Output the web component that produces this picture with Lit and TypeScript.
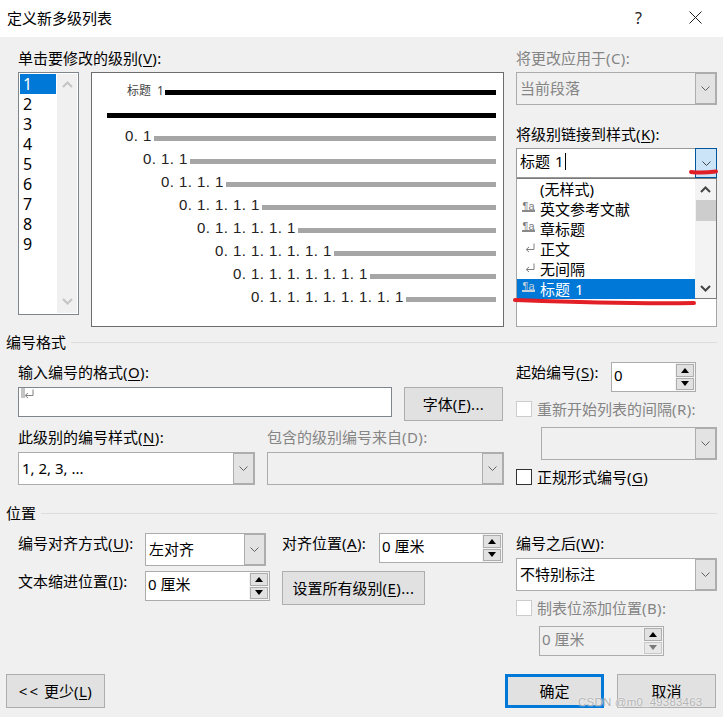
import { LitElement, html, css, svg } from "lit";
import { customElement } from "lit/decorators.js";

const chevron = () => html`<svg width="9" height="5" viewBox="0 0 9 5"><path d="M0.5 0.5 L4.5 4.5 L8.5 0.5" fill="none" stroke="currentColor" stroke-width="1"/></svg>`;
const bigChevron = (up: boolean) => html`<svg width="11" height="7" viewBox="0 0 11 7"><path d="${up ? "M1 6 L5.5 1.5 L10 6" : "M1 1 L5.5 5.5 L10 1"}" fill="none" stroke="currentColor" stroke-width="2"/></svg>`;
const enterIcon = html`<svg width="10" height="10" viewBox="0 0 10 10"><path d="M9 0.5 V6.5 H1.5 M4 4 L1.2 6.5 L4 9" fill="none" stroke="#808080" stroke-width="1"/></svg>`;
const key = (k: string, end = ":") => html`<span class="lat">(<u>${k}</u>)${end}</span>`;
const plainKey = (k: string) => html`<span class="lat">(${k}):</span>`;

function combo(text: unknown, w: number, disabled = false) {
  return html`<div class="combo ${disabled ? "dis" : ""}" style="width:${w}px"><span class="combo-text">${text}</span><span class="combo-btn">${chevron()}</span></div>`;
}
function spin(text: string, w: number, disabled = false) {
  return html`<div class="spin ${disabled ? "dis" : ""}" style="width:${w}px"><span class="spin-text">${text}</span><span class="spin-btns"><span class="sb"><i class="up"></i></span><span class="sb ${disabled ? "off" : ""}"><i class="down"></i></span></span></div>`;
}

@customElement("app-root")
export class AppRoot extends LitElement {
  static styles = css`
    :host { display: block; width: 723px; height: 717px; overflow: hidden; }
    * { box-sizing: border-box; }
    .dlg { position: relative; width: 723px; height: 717px; background: #f0f0f0; display: flex; flex-direction: column; color: #000;
      font: 15px/20px "Noto Sans", "Noto Sans CJK SC", sans-serif; }
    u { text-underline-offset: 2px; text-decoration-thickness: 1px; }
    .lat { letter-spacing: 0.4px; }
    .title { height: 37px; background: #fff; display: flex; align-items: center; padding: 0 21px 2px 7px; flex: none; }
    .title .t { flex: 1; }
    .help { margin-right: 47px; font-size: 16px; color: #222; }
    .top { display: grid; grid-template-columns: 498px 201px; padding: 11px 0 0 18px; }
    .lbl { height: 20px; white-space: nowrap; }
    .gray { color: #858585; }
    .row { display: flex; align-items: flex-start; }
    .list { width: 61px; height: 243px; background: #fff; border: 1px solid #7f858c; padding: 1px; display: flex; margin-right: 12px; margin-top: 4px; }
    .items { width: 36px; font-size: 16px; }
    .items div { height: 20px; padding-left: 3px; }
    .items .sel { background: #0078d7; color: #fff; }
    .sbar { flex: 1; margin-left: 1px; background: #f0f0f0; display: flex; flex-direction: column; justify-content: space-between; align-items: center; padding: 7px 0 8px; color: #c4c4c4; }
    .preview { width: 413px; height: 255px; background: #fff; border: 1px solid #6d6d6d; margin-top: 4px; padding: 8px 7px 0 0; }
    .pr { height: 23px; display: flex; align-items: center; }
    .pr .n { flex: none; white-space: nowrap; font: 15px/20px "Liberation Sans", sans-serif; letter-spacing: 0.44px; color: #222; margin-bottom: 5px; }
    .pr .h { flex: none; white-space: nowrap; font-size: 12px; color: #444; word-spacing: 3px; margin-bottom: 3px; }
    .pr .line { flex: 1; height: 5px; background: #a6a6a6; }
    .pr .line.k { background: #000; }
    .combo { height: 33px; display: flex; background: #fff; border: 1px solid #acacac; }
    .combo-text { flex: 1; padding: 0 2px 0 3px; line-height: 30px; white-space: nowrap; }
    .combo-btn { width: 22px; flex: none; background: #e3e3e3; border: 2px solid #adadad; border-left: 1px solid #adadad; display: flex; align-items: center; justify-content: center; color: #606060; margin: -1px -1px -1px 0; }
    .combo.dis { background: #f0f0f0; }
    .combo.dis .combo-text { color: #858585; }
    .combo.link { height: 30px; border-color: #9a9a9a; }
    .combo.link .combo-text { line-height: 24px; word-spacing: 1px; }
    .caret { display: inline-block; width: 1px; height: 17px; background: #000; margin-left: 2px; vertical-align: -3px; }
    .combo.link .combo-btn { background: #cce4f7; border: 1px solid #005499; margin: -1px; width: 22px; color: #444; }
    .drop { height: 149px; background: #fff; border: 1px solid #a6a6a6; }
    .drop-in { height: 121px; display: flex; border-bottom: 1px solid #7d7d7d; border-top: 1px solid #7a7a7a; border-right: 1px solid #7a7a7a; margin: -1px -1px 0 0; }
    .opts { width: 178px; flex: none; }
    .opt { height: 20px; display: flex; align-items: center; white-space: nowrap; }
    .opt .ic { width: 23px; flex: none; display: flex; justify-content: center; }
    .opt .ic svg { margin: -3px 0 0 3px; }
    .para { font: 11px/8px "Liberation Sans", sans-serif; color: #7a7a7a; border-bottom: 2px solid #8a8a8a; height: 10px; width: 13px; text-align: center; margin-top: -4px; }
    .opt.sel { background: #0078d7; color: #fff; word-spacing: 1px; }
    .opt.sel .para { color: #c4d2df; border-color: #c4d2df; }
    .dsb { flex: 1; position: relative; display: flex; flex-direction: column; justify-content: space-between; align-items: center; padding: 7px 0 6px; color: #444; background: #f3f3f3; }
    .thumb { position: absolute; left: 1px; right: 0; top: 21px; height: 21px; background: #cdcdcd; }
    .sect { display: flex; align-items: center; padding: 0 0 0 6px; height: 20px; width: 717px; }
    .sect::after { content: ""; flex: 1; height: 1px; background: #dcdcdc; margin-left: 5px; }
    .field { width: 374px; height: 30px; background: #fff; border: 1px solid #7f858c; position: relative; margin-right: 12px; overflow: hidden; }
    .mark { position: absolute; left: 2px; top: 0; width: 4px; height: 10px; background: #c4c4c4; }
    .mark-ic { position: absolute; left: 5px; top: -5px; }
    .btn { height: 34px; background: #e1e1e1; border: 1px solid #adadad; display: flex; align-items: center; justify-content: center; white-space: nowrap; flex: none; }
    .ll { letter-spacing: 2px; margin-right: 4px; }
    .spin { height: 30px; display: flex; background: #fff; border: 1px solid #acacac; flex: none; }
    .spin-text { flex: 1; padding-left: 2px; line-height: 25px; white-space: nowrap; }
    .spin.dis { background: #f0f0f0; }
    .spin.dis .spin-text { color: #858585; }
    .spin-btns { width: 20px; flex: none; display: flex; flex-direction: column; gap: 1px; padding: 1px; background: #f4f4f4; }
    .sb { flex: 1; background: #e1e1e1; border: 1px solid #adadad; display: flex; align-items: center; justify-content: center; }
    .sb.off { background: #e8e8e8; border-color: #c8c8c8; }
    .sb.off .down { border-top-color: #7a7a7a; }
    .up, .down { display: block; width: 0; height: 0; border-left: 4.5px solid transparent; border-right: 4.5px solid transparent; }
    .up { border-bottom: 5px solid #000; }
    .down { border-top: 5px solid #000; }
    .chk { display: flex; align-items: center; height: 20px; white-space: nowrap; }
    .box { width: 16px; height: 16px; background: #fff; border: 1px solid #333; margin-right: 5px; flex: none; }
    .chk.dis .box { border-color: #ccc; }
    .sub { display: grid; grid-template-columns: 498px 201px; padding-left: 18px; }
    .cell { padding-top: 10px; }
    .foot { margin-top: auto; display: flex; padding: 0 7px 9px 6px; gap: 13px; }
    .foot .btn { width: 99px; }
    .foot .sp { flex: 1; }
    .btn.def { border: 3px solid #0078d7; }
    .ink { position: absolute; left: 0; top: 0; pointer-events: none; }
    .wm { position: absolute; left: 578px; top: 696px; font: 11.5px/13px "Liberation Sans", sans-serif; color: #b4b4b4; text-shadow: 0 0 2px #fff; letter-spacing: 0.2px; white-space: nowrap; pointer-events: none; }
  `;

  private levels = ["0. 1", "0. 1. 1", "0. 1. 1. 1", "0. 1. 1. 1. 1", "0. 1. 1. 1. 1. 1", "0. 1. 1. 1. 1. 1. 1", "0. 1. 1. 1. 1. 1. 1. 1", "0. 1. 1. 1. 1. 1. 1. 1. 1"];

  render() {
    return html`<div class="dlg">
      <div class="title"><span class="t">定义新多级列表</span><span class="help">?</span>
        <svg width="13" height="13" viewBox="0 0 13 13"><path d="M0.5 0.5 L12.5 12.5 M12.5 0.5 L0.5 12.5" stroke="#222" stroke-width="1" fill="none"/></svg>
      </div>

      <div class="top">
        <div>
          <div class="lbl">单击要修改的级别${key("V")}</div>
          <div class="row">
            <div class="list">
              <div class="items">${[1, 2, 3, 4, 5, 6, 7, 8, 9].map((n) => html`<div class="${n === 1 ? "sel" : ""}">${n}</div>`)}</div>
              <div class="sbar">${bigChevron(true)}${bigChevron(false)}</div>
            </div>
            <div class="preview">
              <div class="pr" style="padding-left:35px"><span class="h" style="width:38px">标题 1</span><span class="line k"></span></div>
              <div class="pr" style="padding-left:15px"><span class="line k"></span></div>
              ${this.levels.map((t, i) => html`<div class="pr" style="padding-left:${33 + 18 * i}px"><span class="n" style="width:${29 + 18 * i}px">${t}</span><span class="line"></span></div>`)}
            </div>
          </div>
        </div>
        <div>
          <div class="lbl gray">将更改应用于${plainKey("C")}</div>
          <div style="height:4px"></div>
          ${combo("当前段落", 201, true)}
          <div style="height:19px"></div>
          <div class="lbl">将级别链接到样式${key("K")}</div>
          <div style="height:4px"></div>
          <div class="combo link" style="width:201px"><span class="combo-text">标题 1<span class="caret"></span></span><span class="combo-btn">${chevron()}</span></div>
          <div class="drop">
            <div class="drop-in">
              <div class="opts">
                <div class="opt"><span class="ic"></span>(无样式)</div>
                <div class="opt"><span class="ic"><span class="para">¶a</span></span>英文参考文献</div>
                <div class="opt"><span class="ic"><span class="para">¶a</span></span>章标题</div>
                <div class="opt"><span class="ic">${enterIcon}</span>正文</div>
                <div class="opt"><span class="ic">${enterIcon}</span>无间隔</div>
                <div class="opt sel"><span class="ic"><span class="para">¶a</span></span>标题 1</div>
              </div>
              <div class="dsb"><span class="thumb"></span>${bigChevron(true)}${bigChevron(false)}</div>
            </div>
          </div>
        </div>
      </div>

      <div style="height:5px"></div>
      <div class="sect">编号格式</div>
      <div class="sub">
        <div class="cell">
          <div class="lbl">输入编号的格式${key("O")}</div>
          <div class="row" style="margin-top:5px">
            <div class="field"><span class="mark"></span><span class="mark-ic">${enterIcon}</span></div>
            <div class="btn" style="width:99px">字体${key("F", "...")}</div>
          </div>
          <div class="row" style="margin-top:6px">
            <div style="width:249px"><div class="lbl">此级别的编号样式${key("N")}</div><div style="height:5px"></div>${combo("1, 2, 3, ...", 237)}</div>
            <div><div class="lbl gray">包含的级别编号来自${plainKey("D")}</div><div style="height:5px"></div>${combo("", 237, true)}</div>
          </div>
        </div>
        <div class="cell">
          <div class="row">
            <div class="lbl" style="width:95px">起始编号${key("S")}</div>
            ${spin("0", 85)}
          </div>
          <div class="chk dis gray" style="margin-top:7px"><span class="box"></span>重新开始列表的间隔${plainKey("R")}</div>
          <div style="margin:8px 0 0 25px">${combo("", 176, true)}</div>
          <div class="chk" style="margin-top:7px"><span class="box"></span>正规形式编号${key("G", "")}</div>
        </div>
      </div>

      <div style="height:16px"></div>
      <div class="sect">位置</div>
      <div class="sub">
        <div class="cell">
          <div class="row">
            <div class="lbl" style="width:127px">编号对齐方式${key("U")}</div>
            ${combo("左对齐", 121)}
            <div class="lbl" style="width:97px;margin-left:16px">对齐位置${key("A")}</div>
            ${spin("0 厘米", 124)}
          </div>
          <div class="row" style="margin-top:5px">
            <div class="lbl" style="width:127px">文本缩进位置${key("I")}</div>
            ${spin("0 厘米", 125)}
            <div class="btn" style="width:143px;margin-left:12px">设置所有级别${key("E", "...")}</div>
          </div>
        </div>
        <div class="cell">
          <div class="lbl">编号之后${key("W")}</div>
          <div style="height:5px"></div>
          ${combo("不特别标注", 201)}
          <div class="chk dis gray" style="margin-top:7px"><span class="box"></span>制表位添加位置${plainKey("B")}</div>
          <div style="margin:8px 0 0 23px">${spin("0 厘米", 125, true)}</div>
        </div>
      </div>

      <div class="foot">
        <div class="btn"><span class="ll">&lt;&lt;</span>更少${key("L", "")}</div>
        <div class="sp"></div>
        <div class="btn def">确定</div>
        <div class="btn">取消</div>
      </div>

      <svg class="ink" width="723" height="717" viewBox="0 0 723 717">
        ${svg`<path d="M691 172 C700 173 708 172.5 716 171.5" fill="none" stroke="#e21f26" stroke-width="4" stroke-linecap="round"/>
        <path d="M515 300 C570 302 620 304 694 303" fill="none" stroke="#e21f26" stroke-width="4" stroke-linecap="round"/>`}
      </svg>
      <div class="wm">CSDN @m0_49383463</div>
    </div>`;
  }
}
